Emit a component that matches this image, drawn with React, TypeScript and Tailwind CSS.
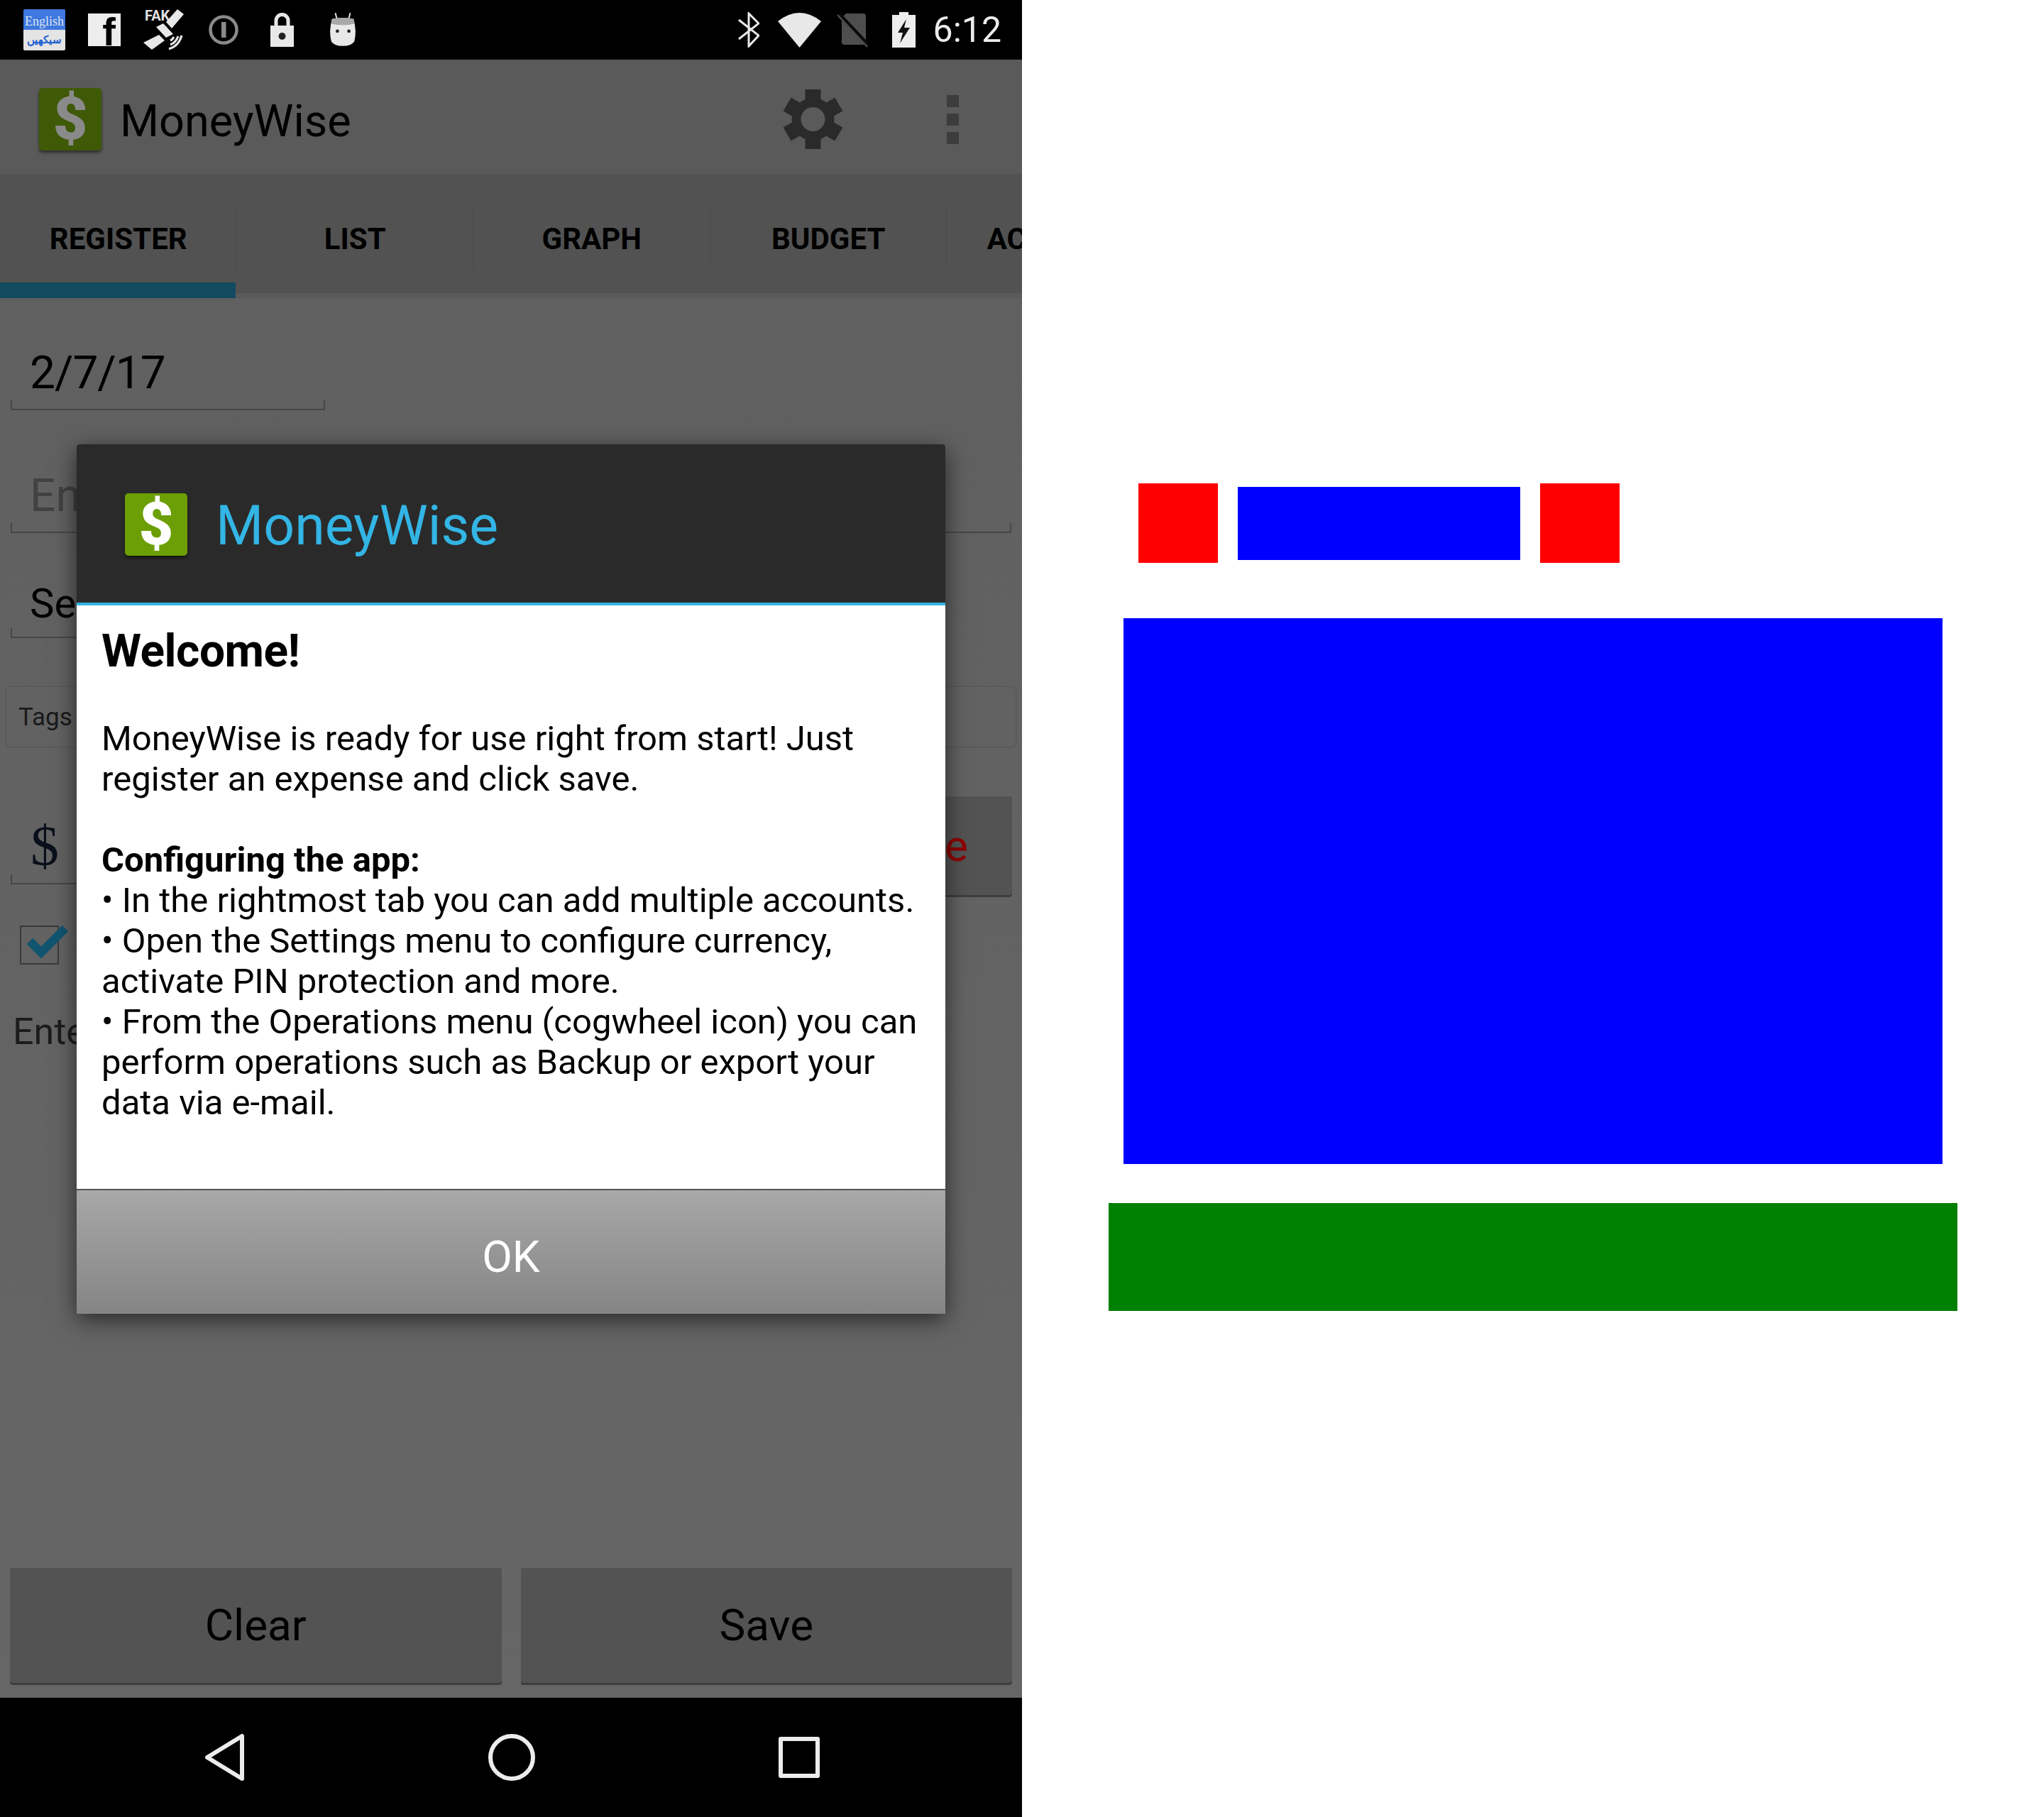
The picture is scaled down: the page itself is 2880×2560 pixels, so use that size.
const roboto = "font-['Roboto',sans-serif]";

function DollarIcon({ dim }: { dim?: boolean }) {
  return (
    <div className={`flex h-[88px] w-[88px] shrink-0 items-center justify-center rounded-[5px] shadow-[0_3px_4px_rgba(0,0,0,0.5)] ${dim ? 'bg-[#3f5a07]' : 'bg-[#6c9f05]'}`}>
      <span className={`${roboto} text-[84px] leading-none font-black ${dim ? 'text-[#8a8a8a]' : 'text-white'}`}>$</span>
    </div>
  );
}

function GearIcon() {
  return (
    <svg width="85" height="84" viewBox="0 0 85 84" fill="#2a2a2a">
      {[0, 60, 120, 180, 240, 300].map((a) => (
        <rect key={a} x="31.5" y="0" width="22" height="24" transform={`rotate(${a} 42.5 42)`} />
      ))}
      <circle cx="42.5" cy="42" r="30" />
      <circle cx="42.5" cy="42" r="17" fill="#5a5a5a" />
    </svg>
  );
}

function StatusBar() {
  return (
    <div className="flex h-[84px] items-center justify-between bg-black pr-[29px] pl-[33px]">
      <div className="flex items-center">
        <div className="flex h-[58px] w-[59px] flex-col overflow-hidden rounded-[2px]">
          <div className="flex h-[29px] items-center justify-center bg-[#3f78e0] pt-[4px] font-['Liberation_Serif',serif] text-[18px] leading-none text-[#dce6f5]">English</div>
          <div className="flex h-[29px] items-center justify-center bg-[#e4e4e4] font-['Liberation_Serif',serif] text-[15px] leading-none font-bold text-[#2060d0]">سیکھیں</div>
        </div>
        <div className="ml-[32px] flex h-[46px] w-[46px] items-end justify-end bg-[#ededed] pr-[7px]">
          <span className="font-['Liberation_Sans',sans-serif] text-[56px] leading-[40px] font-bold text-black">f</span>
        </div>
        <svg className="ml-[32px]" width="58" height="58" viewBox="0 0 58 58">
          <path d="M48 0 L57 7 L40 27 L32 18 Z" fill="#e8e8e8" />
          <path d="M18 25 L28 20 L42 35 L32 40 Z" fill="#e8e8e8" />
          <path d="M22 36 L30 44 L12 57 L0 47 Z" fill="#e8e8e8" />
          <path d="M36 56 Q50 52 54 37 M38 50 Q46 47 49 38 M38 44 Q41 43 43 39" stroke="#e8e8e8" strokeWidth="3" fill="none" />
          <text x="2" y="16" fill="#e0e0e0" fontSize="20" fontWeight="700" fontFamily="Roboto">FAK</text>
        </svg>
        <svg className="ml-[34px]" width="42" height="42" viewBox="0 0 42 42">
          <circle cx="21" cy="21" r="18.5" fill="none" stroke="#8a8a8a" strokeWidth="4.5" />
          <rect x="18" y="10" width="6.5" height="22" fill="#8a8a8a" />
        </svg>
        <svg className="ml-[45px]" width="33" height="48" viewBox="0 0 33 48">
          <path d="M8 19 V11 a8.5 8.5 0 0 1 17 0 V19" stroke="#e8e8e8" strokeWidth="5" fill="none" />
          <path d="M0 18 H33 V48 H0 Z" fill="#e8e8e8" />
          <circle cx="16.5" cy="33" r="5" fill="#222" />
        </svg>
        <svg className="ml-[49px]" width="40" height="48" viewBox="0 0 42 50">
          <path d="M10 0 L13 12 M32 0 L29 12" stroke="#e8e8e8" strokeWidth="2" />
          <path d="M5 9 Q21 6 37 9 Q42 28 38 42 Q34 49 21 49 Q8 49 4 42 Q0 28 5 9 Z" fill="#e8e8e8" />
          <path d="M5 9 Q21 6 37 9 L38 16 Q21 20 4 16 Z" fill="#a8a8a8" />
          <circle cx="13" cy="27" r="2.5" fill="#222" />
          <circle cx="30" cy="27" r="2.5" fill="#222" />
        </svg>
      </div>
      <div className="flex items-center">
        <svg width="30" height="50" viewBox="0 0 30 50">
          <path d="M1 11 L29 33 L15 48 V2 L29 16 L1 38" stroke="#e8e8e8" strokeWidth="3" fill="none" />
        </svg>
        <svg className="ml-[26px]" width="61" height="49" viewBox="0 0 61 49">
          <path d="M0 12 Q30.5 -12 61 12 L30.5 49 Z" fill="#e8e8e8" />
        </svg>
        <svg className="ml-[23px]" width="44" height="50" viewBox="0 0 44 50">
          <path d="M12 2 H36 a4 4 0 0 1 4 4 V42 a4 4 0 0 1 -4 4 H10 a4 4 0 0 1 -4 -4 V8 Z" fill="#4e4e4e" />
          <path d="M2 3 L44 48" stroke="#0a0a0a" strokeWidth="6" />
          <path d="M0 4 L42 49" stroke="#4e4e4e" strokeWidth="2.5" />
        </svg>
        <svg className="ml-[33px]" width="33" height="50" viewBox="0 0 33 50">
          <path d="M10 0 H23 V4 H33 V50 H0 V4 H10 Z" fill="#ededed" />
          <path d="M20 10 L8 29 H15 L11 44 L25 22 H17 Z" fill="#111" />
        </svg>
        <span className={`${roboto} ml-[25px] text-[50px] leading-none text-[#ececec]`}>6:12</span>
      </div>
    </div>
  );
}

function AppBar() {
  return (
    <div className="flex h-[161px] items-center bg-[#5a5a5a] pt-[7px] pr-[89px] pl-[55px]">
      <DollarIcon dim />
      <span className={`${roboto} mt-[4px] ml-[26px] text-[63px] leading-none text-black`}>MoneyWise</span>
      <div className="ml-auto flex items-center gap-[146px]">
        <GearIcon />
        <div className="flex flex-col gap-[9px]">
          <div className="h-[17px] w-[17px] bg-[#3c3c3c]" />
          <div className="h-[17px] w-[17px] bg-[#3c3c3c]" />
          <div className="h-[17px] w-[17px] bg-[#3c3c3c]" />
        </div>
      </div>
    </div>
  );
}

function Tabs() {
  const tabs = ['REGISTER', 'LIST', 'GRAPH', 'BUDGET', 'ACCOUNTS'];
  return (
    <div className="relative h-[175px] overflow-hidden bg-[#5a5a5a]">
      <div className="flex h-[168px] bg-[#525252]">
        {tabs.map((t, i) => (
          <div key={t} className="relative flex w-[333.5px] shrink-0 items-center justify-center pt-[16px]">
            <span className={`${roboto} text-[42px] leading-none font-bold text-black`}>{t}</span>
            {i < 4 && <div className="absolute top-[48px] right-0 h-[85px] w-px bg-[#4a4a4a]" />}
          </div>
        ))}
      </div>
      <div className="absolute bottom-0 left-0 h-[22px] w-[332px] bg-[#124a60]" />
    </div>
  );
}

function Field({ className, text, hint, size = 'text-[64px] leading-[64px]' }: { className: string; text: string; hint?: boolean; size?: string }) {
  return (
    <div className={`relative ml-[15px] border-b-2 border-[#474747] pb-[18px] ${className}`}>
      <span className={`${roboto} ml-[27px] block ${size} ${hint ? 'text-[#424242]' : 'text-black'}`}>{text}</span>
      <div className="absolute bottom-0 left-0 h-[12px] w-[2px] bg-[#474747]" />
      <div className="absolute right-0 bottom-0 h-[12px] w-[2px] bg-[#474747]" />
    </div>
  );
}

function Form() {
  return (
    <div className="flex min-h-0 flex-1 flex-col bg-gradient-to-b from-[#606060] to-[#666666]">
      <Field className="mt-[74px] w-[443px] tracking-[-1px]" text="2/7/17" />
      <Field className="mt-[89px] w-[1410px]" text="En" hint />
      <Field className="mt-[70px] w-[1000px]" text="Se" size="text-[58px] leading-[58px]" />
      <div className={`${roboto} mt-[67px] ml-[7px] flex h-[88px] w-[1426px] items-center rounded-[8px] border-2 border-[#5a5a5a] pt-[3px] pl-[17px] text-[35px] text-[#1a1a1a]`}>Tags</div>
      <div className="mt-[68px] flex h-[139px] items-start pr-[14px]">
        <div className="relative ml-[15px] flex h-[124px] w-[705px] items-center border-b-2 border-[#474747] pt-[18px] pl-[28px]">
          <span className="font-['Liberation_Serif',serif] text-[80px] leading-none text-[#0a0f1c]">$</span>
          <div className="absolute bottom-0 left-0 h-[12px] w-[2px] bg-[#474747]" />
        </div>
        <div className={`${roboto} ml-[14px] flex h-full flex-1 items-center justify-end rounded-[4px] bg-[#535353] pr-[62px] text-[62px] text-[#900000] shadow-[0_3px_0_#3d3d3d]`}>Expense</div>
      </div>
      <div className="relative mt-[43px] ml-[28px] h-[55px] w-[55px] border-2 border-[#3a3a3a]">
        <svg className="absolute top-[-2px] left-[8px]" width="60" height="48" viewBox="0 0 60 48">
          <path d="M4 22 L20 38 L54 4" stroke="#115470" strokeWidth="12" fill="none" />
        </svg>
      </div>
      <span className={`${roboto} mt-[69px] ml-[18px] text-[52px] leading-[52px] text-[#1c1c1c]`}>Enter</span>
      <div className="mt-auto mb-[21px] flex gap-[27px] px-[14px]">
        <button className={`${roboto} h-[162px] flex-1 rounded-[4px] bg-[#535353] pb-[2px] text-[62px] text-black shadow-[0_3px_0_#3d3d3d]`}>Clear</button>
        <button className={`${roboto} h-[162px] flex-1 rounded-[4px] bg-[#535353] pb-[2px] text-[62px] text-black shadow-[0_3px_0_#3d3d3d]`}>Save</button>
      </div>
    </div>
  );
}

function NavBar() {
  return (
    <div className="relative flex h-[168px] items-center justify-center bg-black">
      <svg className="absolute left-[287px]" width="60" height="68" viewBox="0 0 60 68">
        <path d="M54 4 V64 L5 34 Z" stroke="#ececec" strokeWidth="6" strokeLinejoin="round" fill="none" />
      </svg>
      <svg className="absolute left-[687px]" width="68" height="68" viewBox="0 0 68 68">
        <circle cx="34" cy="34" r="30" stroke="#ececec" strokeWidth="6" fill="none" />
      </svg>
      <div className="absolute left-[1097px] h-[58px] w-[58px] rounded-[3px] border-[6px] border-[#ececec]" />
    </div>
  );
}

function WelcomeDialog() {
  return (
    <div className="absolute top-[626px] left-[108px] flex h-[1225px] w-[1224px] flex-col shadow-[0_8px_30px_rgba(0,0,0,0.6)]">
      <div className="flex h-[223px] items-center rounded-t-[4px] bg-[#2a2a2a] pt-[8px] pl-[68px]">
        <div className="mb-[6px]">
          <DollarIcon />
        </div>
        <span className={`${roboto} ml-[40px] text-[77px] leading-none text-[#33b5e5]`}>MoneyWise</span>
      </div>
      <div className="h-[4px] bg-[#33b5e5]" />
      <div className={`${roboto} flex-1 bg-white px-[35px] pt-[33px] text-[49px] leading-[57px] whitespace-nowrap text-black`}>
        <p className="text-[64px] leading-[64px] font-bold tracking-[-0.5px]">Welcome!</p>
        <p className="mt-[62px]">MoneyWise is ready for use right from start! Just<br />register an expense and click save.</p>
        <p className="mt-[57px] font-bold">Configuring the app:</p>
        <p>• In the rightmost tab you can add multiple accounts.</p>
        <p>• Open the Settings menu to configure currency,<br />activate PIN protection and more.</p>
        <p>• From the Operations menu (cogwheel icon) you can<br />perform operations such as Backup or export your<br />data via e-mail.</p>
      </div>
      <div className="h-[2px] bg-[#555]" />
      <button className={`${roboto} h-[174px] bg-gradient-to-b from-[#a8a8a8] to-[#858585] pt-[12px] text-[62px] text-white`}>OK</button>
    </div>
  );
}

function Wireframe() {
  return (
    <div className="flex w-[1440px] flex-col bg-white pt-[681px]">
      <div className="ml-[164px] flex items-center gap-[28px]">
        <div className="h-[112px] w-[112px] bg-[#ff0000]" />
        <div className="h-[103px] w-[398px] bg-[#0000ff]" />
        <div className="h-[112px] w-[112px] bg-[#ff0000]" />
      </div>
      <div className="mt-[78px] ml-[143px] h-[769px] w-[1154px] bg-[#0000ff]" />
      <div className="mt-[55px] ml-[122px] h-[152px] w-[1196px] bg-[#008000]" />
    </div>
  );
}

export default function App() {
  return (
    <div className="flex h-[2560px] w-[2880px]">
      <div className="relative flex h-full w-[1440px] flex-col overflow-hidden">
        <StatusBar />
        <AppBar />
        <Tabs />
        <Form />
        <NavBar />
        <WelcomeDialog />
      </div>
      <Wireframe />
    </div>
  );
}
